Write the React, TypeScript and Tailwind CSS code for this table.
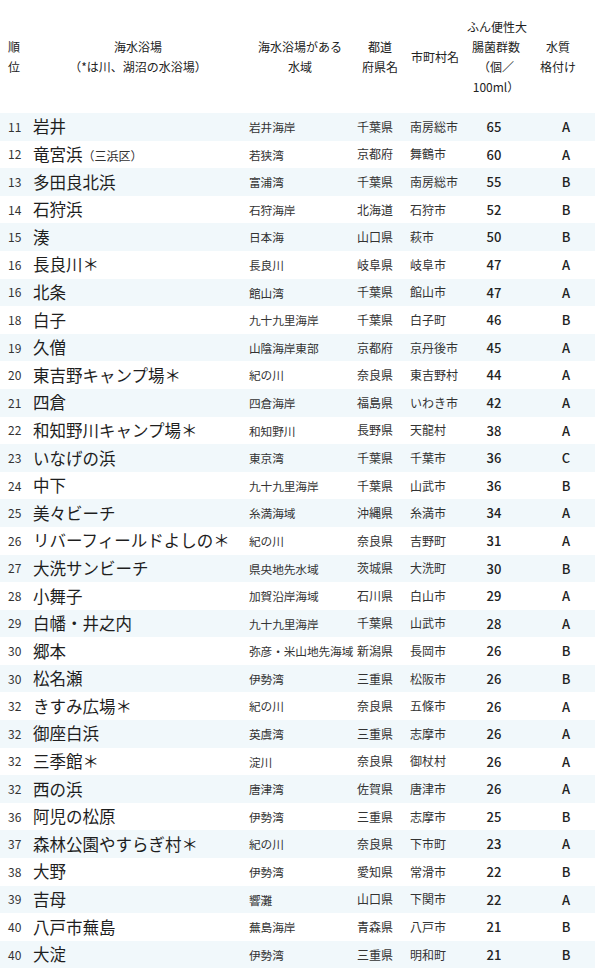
import React from 'react';

type Row = [string, string, string, string, string, string, string, string?];

// rank, name, sea area, prefecture, municipality, count, grade, name suffix (small)
const rows: Row[] = [
    ['11', '岩井', '岩井海岸', '千葉県', '南房総市', '65', 'A'],
    ['12', '竜宮浜', '若狭湾', '京都府', '舞鶴市', '60', 'A', '（三浜区）'],
    ['13', '多田良北浜', '富浦湾', '千葉県', '南房総市', '55', 'B'],
    ['14', '石狩浜', '石狩海岸', '北海道', '石狩市', '52', 'B'],
    ['15', '湊', '日本海', '山口県', '萩市', '50', 'B'],
    ['16', '長良川＊', '長良川', '岐阜県', '岐阜市', '47', 'A'],
    ['16', '北条', '館山湾', '千葉県', '館山市', '47', 'A'],
    ['18', '白子', '九十九里海岸', '千葉県', '白子町', '46', 'B'],
    ['19', '久僧', '山陰海岸東部', '京都府', '京丹後市', '45', 'A'],
    ['20', '東吉野キャンプ場＊', '紀の川', '奈良県', '東吉野村', '44', 'A'],
    ['21', '四倉', '四倉海岸', '福島県', 'いわき市', '42', 'A'],
    ['22', '和知野川キャンプ場＊', '和知野川', '長野県', '天龍村', '38', 'A'],
    ['23', 'いなげの浜', '東京湾', '千葉県', '千葉市', '36', 'C'],
    ['24', '中下', '九十九里海岸', '千葉県', '山武市', '36', 'B'],
    ['25', '美々ビーチ', '糸満海域', '沖縄県', '糸満市', '34', 'A'],
    ['26', 'リバーフィールドよしの＊', '紀の川', '奈良県', '吉野町', '31', 'A'],
    ['27', '大洗サンビーチ', '県央地先水域', '茨城県', '大洗町', '30', 'B'],
    ['28', '小舞子', '加賀沿岸海域', '石川県', '白山市', '29', 'A'],
    ['29', '白幡・井之内', '九十九里海岸', '千葉県', '山武市', '28', 'A'],
    ['30', '郷本', '弥彦・米山地先海域', '新潟県', '長岡市', '26', 'B'],
    ['30', '松名瀬', '伊勢湾', '三重県', '松阪市', '26', 'B'],
    ['32', 'きすみ広場＊', '紀の川', '奈良県', '五條市', '26', 'A'],
    ['32', '御座白浜', '英虞湾', '三重県', '志摩市', '26', 'A'],
    ['32', '三季館＊', '淀川', '奈良県', '御杖村', '26', 'A'],
    ['32', '西の浜', '唐津湾', '佐賀県', '唐津市', '26', 'A'],
    ['36', '阿児の松原', '伊勢湾', '三重県', '志摩市', '25', 'B'],
    ['37', '森林公園やすらぎ村＊', '紀の川', '奈良県', '下市町', '23', 'A'],
    ['38', '大野', '伊勢湾', '愛知県', '常滑市', '22', 'B'],
    ['39', '吉母', '響灘', '山口県', '下関市', '22', 'A'],
    ['40', '八戸市蕪島', '蕪島海岸', '青森県', '八戸市', '21', 'B'],
    ['40', '大淀', '伊勢湾', '三重県', '明和町', '21', 'B'],
];

const App: React.FC = () => {
    return (
        <div className="w-[600px] h-[980px] bg-white text-[#222] font-['Noto_Sans_CJK_JP','Noto_Sans',sans-serif]">
            {/* Header */}
            <div className="h-[113px] flex items-center pl-[8px] text-[12px] leading-[20px] text-[#222] whitespace-nowrap">
                <div className="w-[25px]">順<br />位</div>
                <div className="w-[210px] text-center">海水浴場<br />（*は川、湖沼の水浴場）</div>
                <div className="w-[114px] text-center">海水浴場がある<br />水域</div>
                <div className="w-[46px] text-center">都道<br />府県名</div>
                <div className="w-[64px] text-center">市町村名</div>
                <div className="w-[58px] text-center">ふん便性大<br />腸菌群数<br />（個／<br />100ml）</div>
                <div className="w-[66px] text-center">水質<br />格付け</div>
            </div>

            {/* Rows */}
            <div className="w-[595px]">
                {rows.map((r, i) => (
                    <div
                        key={i}
                        className={`h-[27.6px] flex items-center pl-[8px] ${i % 2 === 0 ? 'bg-[#f1f8fb]' : 'bg-white'}`}
                    >
                        <div className="w-[25px] text-[12px] text-[#333]">{r[0]}</div>
                        <div className="w-[216px] text-[16.5px] text-[#1e1e1e] whitespace-nowrap">
                            {r[1]}
                            {r[7] && <span className="text-[12px] text-[#333]">{r[7]}</span>}
                        </div>
                        <div className="w-[108px] text-[11.7px] text-[#333] whitespace-nowrap tracking-[-0.1px]">{r[2]}</div>
                        <div className="w-[53px] text-[12px] text-[#333]">{r[3]}</div>
                        <div className="w-[62px] text-[12px] text-[#333] whitespace-nowrap">{r[4]}</div>
                        <div className="w-[44px] text-center text-[13px] font-medium text-[#222]">{r[5]}</div>
                        <div className="w-[79px] pl-[21px] text-center text-[13px] font-medium text-[#222]">{r[6]}</div>
                    </div>
                ))}
            </div>
        </div>
    );
};

export default App;
